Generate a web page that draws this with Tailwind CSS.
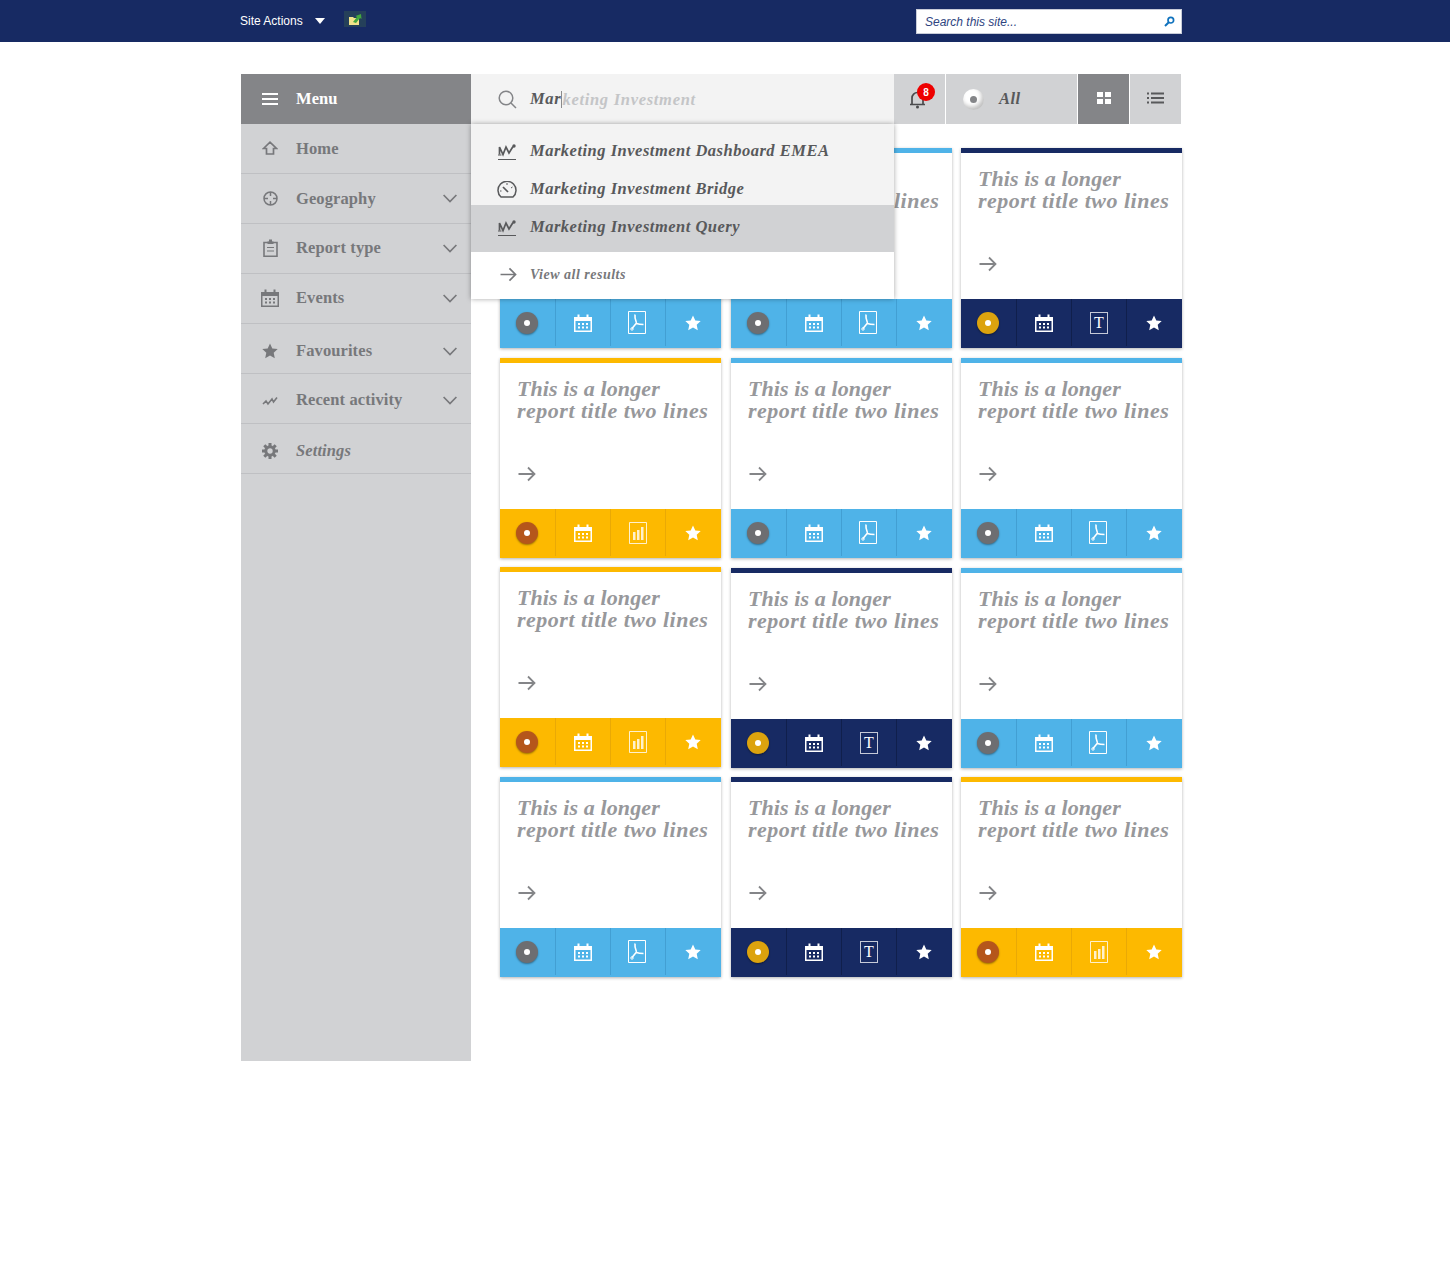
<!DOCTYPE html>
<html lang="en">
<head>
<meta charset="UTF-8">
<title>Reports</title>
<script src="https://cdn.jsdelivr.net/npm/@tailwindcss/browser@4"></script>
</head>
<body class="bg-white min-h-[1270px] font-['Liberation_Serif',serif]">

<svg class="hidden">
  <symbol id="i-cal" viewBox="0 0 18 18"><path fill="currentColor" fill-rule="evenodd" d="M0 3h18v15H0zM1.500 7v9.500h15V7z"/><path fill="currentColor" d="M3.500 .5h2v4h-2zM12.500 .5h2v4h-2zM4 9h2v2H4zM8 9h2v2H8zM12 9h2v2h-2zM4 12.500h2v2H4zM8 12.500h2v2H8zM12 12.500h2v2h-2z"/></symbol>
  <symbol id="i-star" viewBox="0 0 16 16"><path fill="currentColor" d="M8 .5l2.300 5 5.400.6-4 3.700 1.100 5.400L8 12.500l-4.800 2.700 1.100-5.400-4-3.700 5.400-.6z"/></symbol>
  <symbol id="i-pdf" viewBox="0 0 18 23"><path fill="none" stroke="currentColor" d="M.5.500h17v22H.5z"/><path fill="none" stroke="currentColor" stroke-width="1.600" d="M7 3.500c-.5 3 .5 6 1.500 8.500M8.500 12L4 17.500M8.500 12.500c2.500 1 4.500 1 7 1"/><circle cx="4" cy="18" r="1.200" fill="none" stroke="currentColor"/></symbol>
  <symbol id="i-bars" viewBox="0 0 18 22"><path fill="none" stroke="currentColor" stroke-opacity=".8" d="M.5.500h17v21H.5z"/><path fill="currentColor" fill-opacity=".8" d="M4 10h2.500v8H4zM8 8h2.500v10H8zM12 5h2.500v13H12z"/></symbol>
  <symbol id="i-arrow" viewBox="0 0 18 16"><path fill="none" stroke="currentColor" stroke-width="1.800" d="M.5 8H16.500M10 1.500L16.500 8 10 14.500"/></symbol>
  <symbol id="i-chev" viewBox="0 0 14 9"><path fill="none" stroke="currentColor" stroke-width="1.700" d="M.6 1L7 7.500 13.400 1"/></symbol>
  <symbol id="i-spark" viewBox="0 0 18 18"><path fill="none" stroke="currentColor" stroke-width="1.700" d="M1.500 12.500V5l3.500 7.500L8 5l3 6 4-6.500"/><path stroke="currentColor" d="M0 13h3.500"/><circle cx="16" cy="4" r="1.700" fill="currentColor"/><path stroke="currentColor" stroke-width="1" d="M0 17.500h18"/></symbol>
</svg>

<header class="h-[42px] bg-[#172a63] flex items-center relative">
  <span class="ml-[240px] text-white text-[12px] font-['Liberation_Sans',sans-serif]">Site Actions</span>
  <span class="ml-[12px] -mt-[1px] w-0 h-0 border-x-[5px] border-x-transparent border-t-[6px] border-t-white"></span>
  <span class="ml-[19px] -mt-[4px] w-[22px] h-[16px] bg-[#25405a] flex items-center justify-center">
    <svg width="14" height="13" viewBox="0 0 14 13"><path fill="#f1e28a" d="M1 4h4l1 1h5v7H1z"/><path fill="#43a83f" d="M5 9l4-5-1.500-1L13 1l.5 5L12 5 8 10z"/></svg>
  </span>
  <div class="absolute left-[916px] top-[9px] w-[266px] h-[25px] bg-white border border-[#c8ccd8] flex items-center justify-between pl-[8px] pr-[6px] font-['Liberation_Sans',sans-serif]">
    <span class="italic text-[12px] text-[#2e4480]">Search this site...</span>
    <svg width="11" height="11" viewBox="0 0 11 11"><circle cx="6.800" cy="4.200" r="2.800" fill="none" stroke="#0f72bd" stroke-width="1.700"/><path stroke="#0f72bd" stroke-width="2" d="M4.800 6.200L1 10"/></svg>
  </div>
</header>

<div class="flex ml-[241px] mt-[32px] w-[941px]">
  <aside class="w-[230px] h-[987px] bg-[#d1d2d4] text-[#77787b] shrink-0 font-bold text-[16.500px] tracking-[0.1px]">
    <div class="h-[50px] bg-[#848588] text-white flex items-center">
      <svg class="ml-[21px]" width="16" height="12" viewBox="0 0 16 12"><path stroke="#fff" stroke-width="2" d="M0 1h16M0 6h16M0 11h16"/></svg>
      <span class="ml-[18px]">Menu</span>
    </div>
    <div class="h-[50px] flex items-center border-b border-[#bfc0c3]">
      <svg class="ml-[21px] -mt-[1px]" width="16" height="14" viewBox="0 0 16 14"><path fill="none" stroke="#77787b" stroke-width="1.700" d="M1.500 7.500L8 1.200l6.500 6.300h-3V13h-7V7.500z"/></svg>
      <span class="ml-[18px] mt-[2px]">Home</span>
    </div>
    <div class="h-[50px] flex items-center border-b border-[#bfc0c3]">
      <svg class="ml-[22px]" width="15" height="15" viewBox="0 0 15 15"><circle cx="7.500" cy="7.500" r="6.500" fill="none" stroke="#77787b" stroke-width="1.500"/><path stroke="#77787b" stroke-width="1.500" d="M7.500 1v4M7.500 10v4M1 7.500h4M10 7.500h4"/></svg>
      <span class="ml-[18px] mt-[2px]">Geography</span>
      <svg class="ml-auto mr-[14px] text-[#77787b]" width="14" height="9"><use href="#i-chev"/></svg>
    </div>
    <div class="h-[50px] flex items-center border-b border-[#bfc0c3]">
      <svg class="ml-[22px] -mt-[1px]" width="15" height="18" viewBox="0 0 15 18"><path fill="none" stroke="#77787b" stroke-width="1.600" d="M1 3.500h13v13.700H1z"/><path fill="#77787b" d="M4.500 2.500h6V5h-6zM6 .5h3v2H6zM4 8h7v1H4zM4 11.500h7v1H4z"/></svg>
      <span class="ml-[18px]">Report type</span>
      <svg class="ml-auto mr-[14px] text-[#77787b]" width="14" height="9"><use href="#i-chev"/></svg>
    </div>
    <div class="h-[50px] flex items-center border-b border-[#bfc0c3]">
      <svg class="ml-[20px] -mt-[2px] text-[#77787b]" width="18" height="18"><use href="#i-cal"/></svg>
      <span class="ml-[17px]">Events</span>
      <svg class="ml-auto mr-[14px] text-[#77787b]" width="14" height="9"><use href="#i-chev"/></svg>
    </div>
    <div class="h-[50px] flex items-center border-b border-[#bfc0c3] pt-[5px]">
      <svg class="ml-[21px] text-[#77787b]" width="16" height="16"><use href="#i-star"/></svg>
      <span class="ml-[18px]">Favourites</span>
      <svg class="ml-auto mr-[14px] text-[#77787b]" width="14" height="9"><use href="#i-chev"/></svg>
    </div>
    <div class="h-[50px] flex items-center border-b border-[#bfc0c3] pt-[4px]">
      <svg class="ml-[21px]" width="16" height="10" viewBox="0 0 16 10"><path fill="none" stroke="#77787b" stroke-width="1.600" d="M1 8l3-3 2 3 4-5 1.500 3L15 1.500"/></svg>
      <span class="ml-[18px]">Recent activity</span>
      <svg class="ml-auto mr-[14px] text-[#77787b]" width="14" height="9"><use href="#i-chev"/></svg>
    </div>
    <div class="h-[50px] flex items-center border-b border-[#bfc0c3] pt-[5px]">
      <svg class="ml-[21px]" width="16" height="16" viewBox="0 0 16 16"><circle cx="8" cy="8" r="4.200" fill="none" stroke="#77787b" stroke-width="3"/><path stroke="#77787b" stroke-width="3" d="M8 0v3M8 13v3M0 8h3M13 8h3M2.300 2.300l2.100 2.100M11.600 11.600l2.100 2.100M2.300 13.700l2.100-2.100M11.600 4.400l2.100-2.100"/></svg>
      <span class="ml-[18px] italic">Settings</span>
    </div>
  </aside>

  <main class="w-[711px] relative">
    <div class="flex h-[50px]">
      <div class="w-[423px] bg-[#f3f3f3] flex items-center">
        <svg class="ml-[27px]" width="19" height="19" viewBox="0 0 19 19"><circle cx="8" cy="8" r="6.800" fill="none" stroke="#848588" stroke-width="1.500"/><path stroke="#848588" stroke-width="1.500" d="M13 13l5 5"/></svg>
        <span class="ml-[13px] italic font-bold text-[16.500px] tracking-[0.7px] text-[#58595b]">Mar</span>
        <span class="italic font-bold text-[16.500px] tracking-[0.7px] text-[#c4c5c7] border-l border-[#8a8b8d] leading-[17px]">keting Investment</span>
      </div>
      <div class="w-[51px] bg-[#d1d2d4] flex items-center pl-[15px] relative">
        <svg width="17" height="19" viewBox="0 0 17 19"><path fill="none" stroke="#4a4b4d" stroke-width="1.700" d="M1 14.500h15M3 14.500V8a5.500 5.500 0 0 1 11 0v6.500"/><circle cx="8.500" cy="17" r="1.500" fill="#4a4b4d"/></svg>
        <span class="absolute left-[23px] top-[9px] w-[18px] h-[18px] rounded-full bg-[#ee0000] text-white text-[10px] font-bold font-['Liberation_Sans',sans-serif] flex items-center justify-center">8</span>
      </div>
      <div class="w-[131px] ml-px bg-[#d1d2d4] flex items-center">
        <span class="ml-[17px] w-[21px] h-[21px] rounded-full bg-white shadow-[inset_-2px_-3px_4px_rgba(0,0,0,0.25)] flex items-center justify-center">
          <span class="w-[7px] h-[7px] rounded-full bg-[#848588]"></span>
        </span>
        <span class="ml-[15px] italic font-bold text-[16.500px] tracking-[0.5px] text-[#58595b]">All</span>
      </div>
      <div class="w-[51px] ml-px bg-[#848588] flex items-center justify-center pb-[2px]">
        <span class="grid grid-cols-[6px_6px] gap-[2px]">
          <span class="h-[5px] bg-white"></span><span class="h-[5px] bg-white"></span>
          <span class="h-[5px] bg-white"></span><span class="h-[5px] bg-white"></span>
        </span>
      </div>
      <div class="w-[51px] ml-px bg-[#d1d2d4] flex items-center justify-center pb-[2px]">
        <svg width="17" height="12" viewBox="0 0 17 12"><path stroke="#58595b" stroke-width="2" d="M4 1.500h13M4 6h13M4 10.500h13M0 1.500h2M0 6h2M0 10.500h2"/></svg>
      </div>
    </div>

    <!-- search suggestions -->
    <div class="absolute left-0 top-[50px] w-[423px] z-10 shadow-[0_0_5px_rgba(0,0,0,0.35)] italic font-bold text-[16.500px] tracking-[0.5px] text-[#58595b]">
      <div class="bg-[#f3f3f3] h-[81px] pt-[8px]">
        <div class="h-[38px] flex items-center">
          <svg class="ml-[27px] text-[#58595b]" width="18" height="18"><use href="#i-spark"/></svg>
          <span class="ml-[14px]">Marketing Investment Dashboard EMEA</span>
        </div>
        <div class="h-[38px] flex items-center">
          <svg class="ml-[26px]" width="20" height="17" viewBox="0 0 20 17"><path fill="none" stroke="#58595b" stroke-width="1.500" d="M4 16h12a9 9 0 1 0-12 0z"/><path stroke="#58595b" stroke-width="1.700" d="M6 6l5 5"/><path stroke="#58595b" d="M10 2v2M15.500 6l-1.500 1M3 10h1.500"/></svg>
          <span class="ml-[13px]">Marketing Investment Bridge</span>
        </div>
      </div>
      <div class="bg-[#d1d2d4] h-[47px] flex items-center">
        <svg class="ml-[27px] -mt-[3px] text-[#58595b]" width="18" height="18"><use href="#i-spark"/></svg>
        <span class="ml-[14px] -mt-[3px]">Marketing Investment Query</span>
      </div>
      <div class="bg-white h-[47px] flex items-center text-[14px] text-[#77787b] pb-[3px]">
        <svg class="ml-[29px] text-[#77787b]" width="17" height="15"><use href="#i-arrow"/></svg>
        <span class="ml-[13px]">View all results</span>
      </div>
    </div>

    <div id="cards" class="grid grid-cols-[231px_230px_221px] gap-y-[10px] ml-[29px] mt-[24px]"></div>
  </main>
</div>

<script>
  const themes = {
    blue: {
      stripe: 'border-t-[#4fb3e8]', foot: 'bg-[#4fb3e8]', line: 'border-r-[#429fd3]',
      dial: 'bg-[#6d6e71]', file: '<svg class="text-white mr-[2px]" width="18" height="23"><use href="#i-pdf"/></svg>'
    },
    navy: {
      stripe: 'border-t-[#172a63]', foot: 'bg-[#172a63]', line: 'border-r-[#101f4c]',
      dial: 'bg-[#dca30e]', file: '<span class="w-[18px] h-[22px] border border-[#c6cad8] text-white text-[16px] leading-[20px] text-center font-[\'Liberation_Serif\',serif]">T</span>'
    },
    yellow: {
      stripe: 'border-t-[#fdb900]', foot: 'bg-[#fdb900]', line: 'border-r-[#eaa905]',
      dial: 'bg-[#b5561b]', file: '<svg class="text-white" width="18" height="22"><use href="#i-bars"/></svg>'
    }
  };

  // top to bottom, left to right
  const cards = ['blue', 'blue', 'navy', 'yellow', 'blue', 'blue', 'yellow', 'navy', 'blue', 'blue', 'navy', 'yellow'];

  document.getElementById('cards').innerHTML = cards.map((name, i) => {
    const t = themes[name];
    const nudge = i === 6 || i > 8 ? '-mt-px' : '';
    return `<article class="w-[221px] h-[200px] flex flex-col bg-white border-t-[5px] ${t.stripe} shadow-[0_1px_3px_rgba(0,0,0,0.3)] ${nudge}">
      <h2 class="pt-[15px] pl-[17px] italic font-bold text-[22px] leading-[22px] text-[#97989b] tracking-[0.5px]"><span class="tracking-[0.1px]">This is a longer</span><br>report title two lines</h2>
      <svg class="ml-[18px] mt-[44px] text-[#848588]" width="18" height="16"><use href="#i-arrow"/></svg>
      <div class="mt-auto h-[49px] flex text-white pb-[2px] ${t.foot}">
        <div class="w-[56px] flex items-center justify-center border-r ${t.line}">
          <span class="mr-[1px] w-[22px] h-[22px] rounded-full flex items-center justify-center shadow-[0_1px_2px_rgba(0,0,0,0.4)] ${t.dial}"><span class="w-[6px] h-[6px] rounded-full bg-white"></span></span>
        </div>
        <div class="w-[55px] flex items-center justify-center border-r ${t.line}"><svg width="18" height="18"><use href="#i-cal"/></svg></div>
        <div class="w-[55px] flex items-center justify-center border-r ${t.line}">${t.file}</div>
        <div class="w-[55px] flex items-center justify-center"><svg class="mr-[2px]" width="16" height="16"><use href="#i-star"/></svg></div>
      </div>
    </article>`;
  }).join('');
</script>
</body>
</html>
